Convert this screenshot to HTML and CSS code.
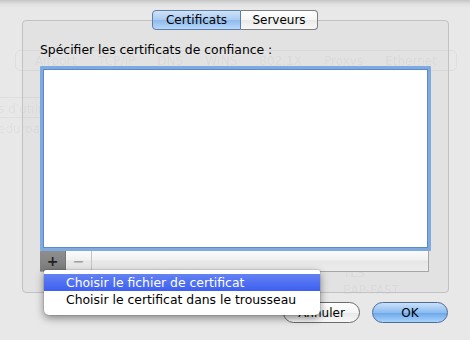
FILE: index.html
```html
<!DOCTYPE html>
<html lang="fr">
<head>
<meta charset="utf-8"/>
<title>Certificats</title>
<link rel="stylesheet" href="styles.css">
</head>
<body>
<div class="ghost">
  <div class="ghost-bar">
    <span>Airport</span><span>TCP/IP</span><span>DNS</span><span>WINS</span><span>802.1X</span><span>Proxys</span><span>Ethernet</span>
  </div>
  <div class="ghost-row first">s d'utilisateur</div>
  <div class="ghost-row">eduroam</div>
  <div class="ghost-eap">TLS<br/>EAP-FAST</div>
</div>
<div class="sheet">
  <div class="tabs">
    <button class="tab selected">Certificats</button>
    <button class="tab">Serveurs</button>
  </div>
  <div class="group">
    <label class="caption">Spécifier les certificats de confiance :</label>
    <div class="cert-list"></div>
    <div class="list-tools">
      <button class="tool pressed">+</button>
      <button class="tool">−</button>
    </div>
  </div>
  <div class="actions">
    <button class="push">Annuler</button>
    <button class="push default">OK</button>
  </div>
</div>
<ul class="menu">
  <li class="hl">Choisir le fichier de certificat</li>
  <li>Choisir le certificat dans le trousseau</li>
</ul>
</body>
</html>
```

FILE: styles.css
```css
body {
    margin: 0;
    width: 470px;
    height: 340px;
    overflow: hidden;
    position: relative;
    font-family: 'DejaVu Sans', 'Liberation Sans', sans-serif;
    font-size: 12px;
    color: #000;
    background: linear-gradient(#c4c4c4, #e0e0e0 4px, #e8e8e8 8px);
}
button {
    font-family: inherit;
    font-size: 12px;
    color: #000;
    margin: 0;
    padding: 0;
}

/* faded window behind the sheet */
.ghost {
    position: absolute;
    left: 0;
    top: 0;
    width: 470px;
    height: 340px;
    color: rgba(0,0,0,0.055);
    font-size: 12px;
    z-index: 0;
}
.ghost-bar {
    margin: 50px 13px 0 15px;
    height: 21px;
    border: 1px solid rgba(0,0,0,0.045);
    border-radius: 5px;
    display: flex;
    align-items: flex-end;
    justify-content: space-around;
    padding: 0 8px 3px 8px;
    box-sizing: border-box;
    line-height: 11px;
}
.ghost-row {
    padding: 4px 0 1px 0;
    border-top: 1px solid rgba(0,0,0,0.035);
    width: 40px;
    line-height: 14px;
    overflow: hidden;
    white-space: nowrap;
    text-indent: -2px;
}
.ghost-row.first {
    margin-top: 26px;
}
.ghost-eap {
    margin: 128px 0 0 343px;
    line-height: 17px;
}

.sheet {
    position: relative;
    z-index: 1;
}
.tabs {
    position: relative;
    z-index: 2;
    display: flex;
    justify-content: center;
    padding-top: 10px;
    height: 20px;
}
.tab {
    height: 20px;
    border: 1px solid #7d7d7d;
    background: linear-gradient(#ffffff, #f6f6f6 50%, #e9e9e9 51%, #f7f7f7);
    box-sizing: border-box;
}
.tab:first-child {
    width: 89px;
    border-radius: 4px 0 0 4px;
    border-right-color: #8a8a8a;
}
.tab:last-child {
    width: 77px;
    border-left: none;
    border-radius: 0 4px 4px 0;
}
.tab.selected {
    background: linear-gradient(#cfe2f8, #a9cbf1 50%, #8dbaec 51%, #b8d8fa);
    border-color: #5e7fa6;
}

.group {
    margin: -10px 0 0 22px;
    width: 427px;
    height: 273px;
    box-sizing: border-box;
    border: 1px solid #c2c2c2;
    border-radius: 4px;
    background: rgba(0,0,0,0.025);
    padding: 22px 0 0 17px;
}
.caption {
    display: block;
    font-size: 12.4px;
    line-height: 14px;
}
.cert-list {
    margin-top: 9px;
    width: 391px;
    height: 185px;
    box-sizing: border-box;
    border: 3px solid #7eaadf;
    border-radius: 1px;
    background: #fff;
    box-shadow: inset 0 0 0 1px #5b8ac8;
}
.list-tools {
    width: 389px;
    height: 21px;
    box-sizing: border-box;
    border: 1px solid #a6a6a6;
    border-top: none;
    border-left: none;
    background: linear-gradient(#fbfbfb, #f1f1f1 45%, #e6e6e6 50%, #ececec);
    display: flex;
}
.tool {
    width: 26px;
    height: 20px;
    border: none;
    border-right: 1px solid #c4c4c4;
    background: transparent;
    font-size: 14px;
    font-weight: bold;
    line-height: 20px;
    color: #a0a0a0;
}
.tool.pressed {
    background: linear-gradient(#8e8e8e, #7c7c7c);
    border-right-color: #777;
    color: #222;
}

.actions {
    display: flex;
    justify-content: flex-end;
    gap: 12px;
    margin: 9px 22px 0 0;
}
.push {
    width: 77px;
    height: 21px;
    border: 1px solid #6a6a6a;
    border-radius: 11px;
    background: linear-gradient(#ffffff, #f5f5f5 50%, #e7e7e7 51%, #f8f8f8);
}
.push.default {
    width: 76px;
    border-color: #4d6b93;
    background: linear-gradient(#c9e0fa, #8dbcf0 50%, #6aa5ea 51%, #a8d3fb);
}

.menu {
    position: absolute;
    z-index: 5;
    left: 44px;
    top: 270px;
    width: 276px;
    margin: 0;
    padding: 4px 0 0 0;
    height: 45px;
    box-sizing: border-box;
    list-style: none;
    font-size: 12.4px;
    background: #fff;
    border-radius: 2px 2px 5px 5px;
    box-shadow: 0 3px 9px rgba(0,0,0,0.45), 0 0 0 1px rgba(0,0,0,0.08);
}
.menu li {
    height: 17px;
    line-height: 17px;
    padding-left: 22px;
    white-space: nowrap;
}
.menu li.hl {
    color: #fff;
    background: linear-gradient(#6382f3, #3e5ff0);
}
```
